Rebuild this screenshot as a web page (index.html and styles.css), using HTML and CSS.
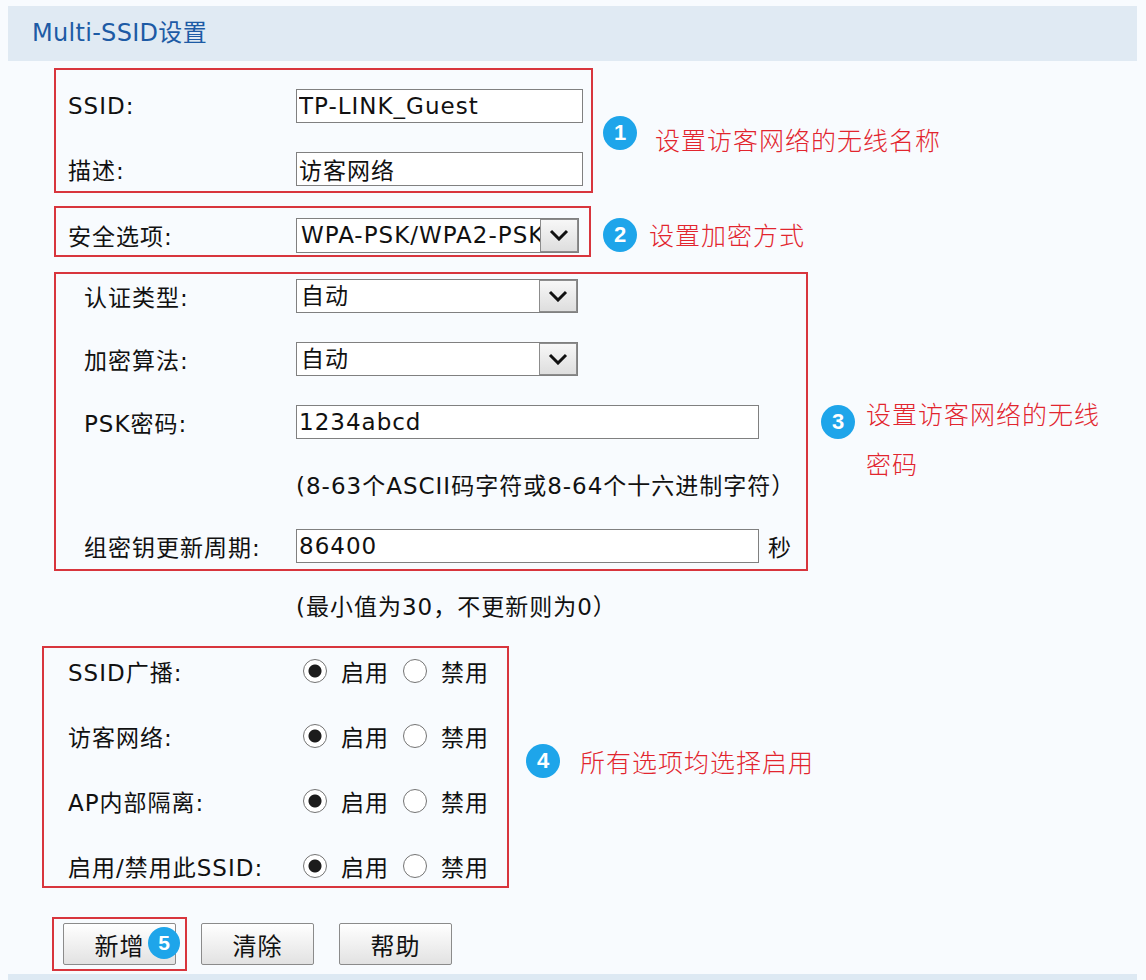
FILE: index.html
```html
<!DOCTYPE html>
<html lang="zh-CN">
<head>
  <meta charset="UTF-8">
  <title>Multi-SSID设置</title>
  <link rel="stylesheet" href="styles.css">
</head>
<body>
  <div class="page">
    <div class="head">Multi-SSID设置</div>

    <div class="step step-1">
      <div class="frame frame-ssid">
        <div class="row"><span class="lbl">SSID:</span><input class="txt txt-mid" type="text" value="TP-LINK_Guest"></div>
        <div class="row"><span class="lbl">描述:</span><input class="txt txt-mid" type="text" value="访客网络"></div>
      </div>
      <div class="note note-1"><span class="badge">1</span><span class="note-text">设置访客网络的无线名称</span></div>
    </div>

    <div class="step step-2">
      <div class="frame frame-sec">
        <div class="row">
          <span class="lbl">安全选项:</span>
          <div class="select select-wide"><span class="select-val">WPA-PSK/WPA2-PSK</span><span class="select-btn"><svg width="20" height="12" viewBox="0 0 20 12"><path d="M2 2l8 8 8-8" fill="none" stroke="#111" stroke-width="3"/></svg></span></div>
        </div>
      </div>
      <div class="note note-2"><span class="badge">2</span><span class="note-text">设置加密方式</span></div>
    </div>

    <div class="step step-3">
      <div class="frame frame-psk">
        <div class="row">
          <span class="lbl">认证类型:</span>
          <div class="select"><span class="select-val">自动</span><span class="select-btn"><svg width="20" height="12" viewBox="0 0 20 12"><path d="M2 2l8 8 8-8" fill="none" stroke="#111" stroke-width="3"/></svg></span></div>
        </div>
        <div class="row">
          <span class="lbl">加密算法:</span>
          <div class="select"><span class="select-val">自动</span><span class="select-btn"><svg width="20" height="12" viewBox="0 0 20 12"><path d="M2 2l8 8 8-8" fill="none" stroke="#111" stroke-width="3"/></svg></span></div>
        </div>
        <div class="row"><span class="lbl">PSK密码:</span><input class="txt txt-long" type="text" value="1234abcd"></div>
        <div class="row row-hint"><span class="lbl"></span><span class="hint">(8-63个ASCII码字符或8-64个十六进制字符）</span></div>
        <div class="row"><span class="lbl">组密钥更新周期:</span><input class="txt txt-long" type="text" value="86400"><span class="unit">秒</span></div>
      </div>
      <div class="note note-3"><span class="badge">3</span><span class="note-text">设置访客网络的无线密码</span></div>
    </div>

    <div class="hint hint-min">(最小值为30，不更新则为0）</div>

    <div class="step step-4">
      <div class="frame frame-radio">
        <div class="row">
          <span class="lbl">SSID广播:</span>
          <label class="opt"><input type="radio" name="bcast" checked>启用</label>
          <label class="opt"><input type="radio" name="bcast">禁用</label>
        </div>
        <div class="row">
          <span class="lbl">访客网络:</span>
          <label class="opt"><input type="radio" name="guest" checked>启用</label>
          <label class="opt"><input type="radio" name="guest">禁用</label>
        </div>
        <div class="row">
          <span class="lbl">AP内部隔离:</span>
          <label class="opt"><input type="radio" name="isolate" checked>启用</label>
          <label class="opt"><input type="radio" name="isolate">禁用</label>
        </div>
        <div class="row">
          <span class="lbl">启用/禁用此SSID:</span>
          <label class="opt"><input type="radio" name="ssid" checked>启用</label>
          <label class="opt"><input type="radio" name="ssid">禁用</label>
        </div>
      </div>
      <div class="note note-4"><span class="badge">4</span><span class="note-text">所有选项均选择启用</span></div>
    </div>

    <div class="actions">
      <div class="frame frame-btn">
        <button class="btn">新增<span class="badge badge-btn">5</span></button>
      </div>
      <button class="btn btn-clear">清除</button>
      <button class="btn btn-help">帮助</button>
    </div>

    <div class="foot"></div>
  </div>
</body>
</html>
```

FILE: styles.css
```css
body{margin:0;background:#f8fbfe;font-family:"DejaVu Sans","Noto Sans CJK SC",sans-serif;font-size:23px;letter-spacing:1px;color:#111;}
.page{padding:6px 9px 0 8px;}

.head{height:55px;line-height:55px;background:#e0eaf3;padding-left:24px;color:#1d5ba5;font-size:24px;letter-spacing:0.3px;}

.step{display:flex;align-items:center;margin-left:46px;}
.step-1{margin-top:7px;}
.step-2{margin-top:13px;}
.step-3{margin-top:15px;}
.step-4{margin-left:34px;}

.frame{border:2px solid #d8353d;box-sizing:border-box;}
.frame-ssid{width:539px;padding:19px 0 5px 12px;}
.frame-sec{width:537px;padding:10px 0 3px 12px;}
.frame-psk{width:754px;padding:5px 0 6px 28px;}
.frame-radio{width:467px;padding:6px 0 3px 24px;}

.row{display:flex;align-items:center;height:34px;}
.row + .row{margin-top:29px;}
.frame-radio .row + .row{margin-top:31px;}
.row-hint{height:32px;}
.lbl{flex:none;width:228px;}
.frame-psk .lbl{width:212px;}

.txt{box-sizing:border-box;height:34px;margin:0;padding:0 2px;border:1px solid #808080;background:#fff;font:inherit;letter-spacing:inherit;color:#111;outline:none;}
.txt-mid{width:287px;}
.txt-long{width:463px;}
.unit{margin-left:9px;}

.select{box-sizing:border-box;display:flex;width:282px;height:34px;border:1px solid #808080;background:#fff;overflow:hidden;}
.select-wide{width:283px;height:35px;}
.select-val{flex:1;padding-left:4px;white-space:nowrap;overflow:hidden;line-height:32px;}
.select-btn{flex:none;box-sizing:border-box;width:38px;border:1px solid #8c8c8c;background:linear-gradient(#f7f7f7,#dedede);display:flex;align-items:center;justify-content:center;}

.hint{white-space:nowrap;}
.hint-min{margin:20px 0 23px 288px;height:32px;line-height:32px;}

.opt{display:flex;align-items:center;}
.opt input{appearance:none;-webkit-appearance:none;box-sizing:border-box;width:24px;height:24px;margin:0 14px 0 7px;border:1.5px solid #747474;border-radius:50%;background:#fff;}
.opt + .opt input{margin-left:14px;}
.opt input:checked{background:radial-gradient(circle,#1c1c1c 0 6px,#fff 7px);}

.note{display:flex;align-items:center;margin-left:13px;letter-spacing:0;}
.badge{flex:none;width:34px;height:34px;border-radius:50%;background:#1ea5ea;color:#fff;font:bold 22px/34px "Liberation Sans",Arial,sans-serif;letter-spacing:0;text-align:center;}
.note-text{margin-left:12px;font-family:"Noto Sans CJK SC",sans-serif;font-weight:300;font-size:25px;letter-spacing:1px;color:#e2252e;line-height:1.3;}
.note-1{margin-left:10px;padding-top:5px;}
.note-1 .note-text{margin-left:18px;margin-top:12px;}
.note-2{margin-left:12px;padding-top:6px;}
.note-3{margin-left:13px;margin-top:33px;align-items:flex-start;}
.note-3 .badge{margin-top:17px;}
.note-3 .note-text{width:240px;line-height:50px;margin-left:11px;}
.note-4{margin-left:17px;margin-bottom:12px;}
.note-4 .note-text{margin-left:20px;}

.actions{display:flex;align-items:center;margin:29px 0 0 44px;}
.frame-btn{padding:4px 9px;}
.btn{position:relative;box-sizing:border-box;width:113px;height:42px;padding:0;border:1px solid #8b8b8b;border-radius:2px;background:linear-gradient(#ffffff,#e2e2e2);font:inherit;font-size:24px;letter-spacing:1px;color:#111;}
.btn-clear{margin-left:14px;}
.btn-help{margin-left:25px;}
.badge-btn{position:absolute;left:84px;top:3px;width:32px;height:32px;line-height:32px;font-size:21px;}

.foot{margin-top:3px;height:10px;background:#dde9f3;}
```
